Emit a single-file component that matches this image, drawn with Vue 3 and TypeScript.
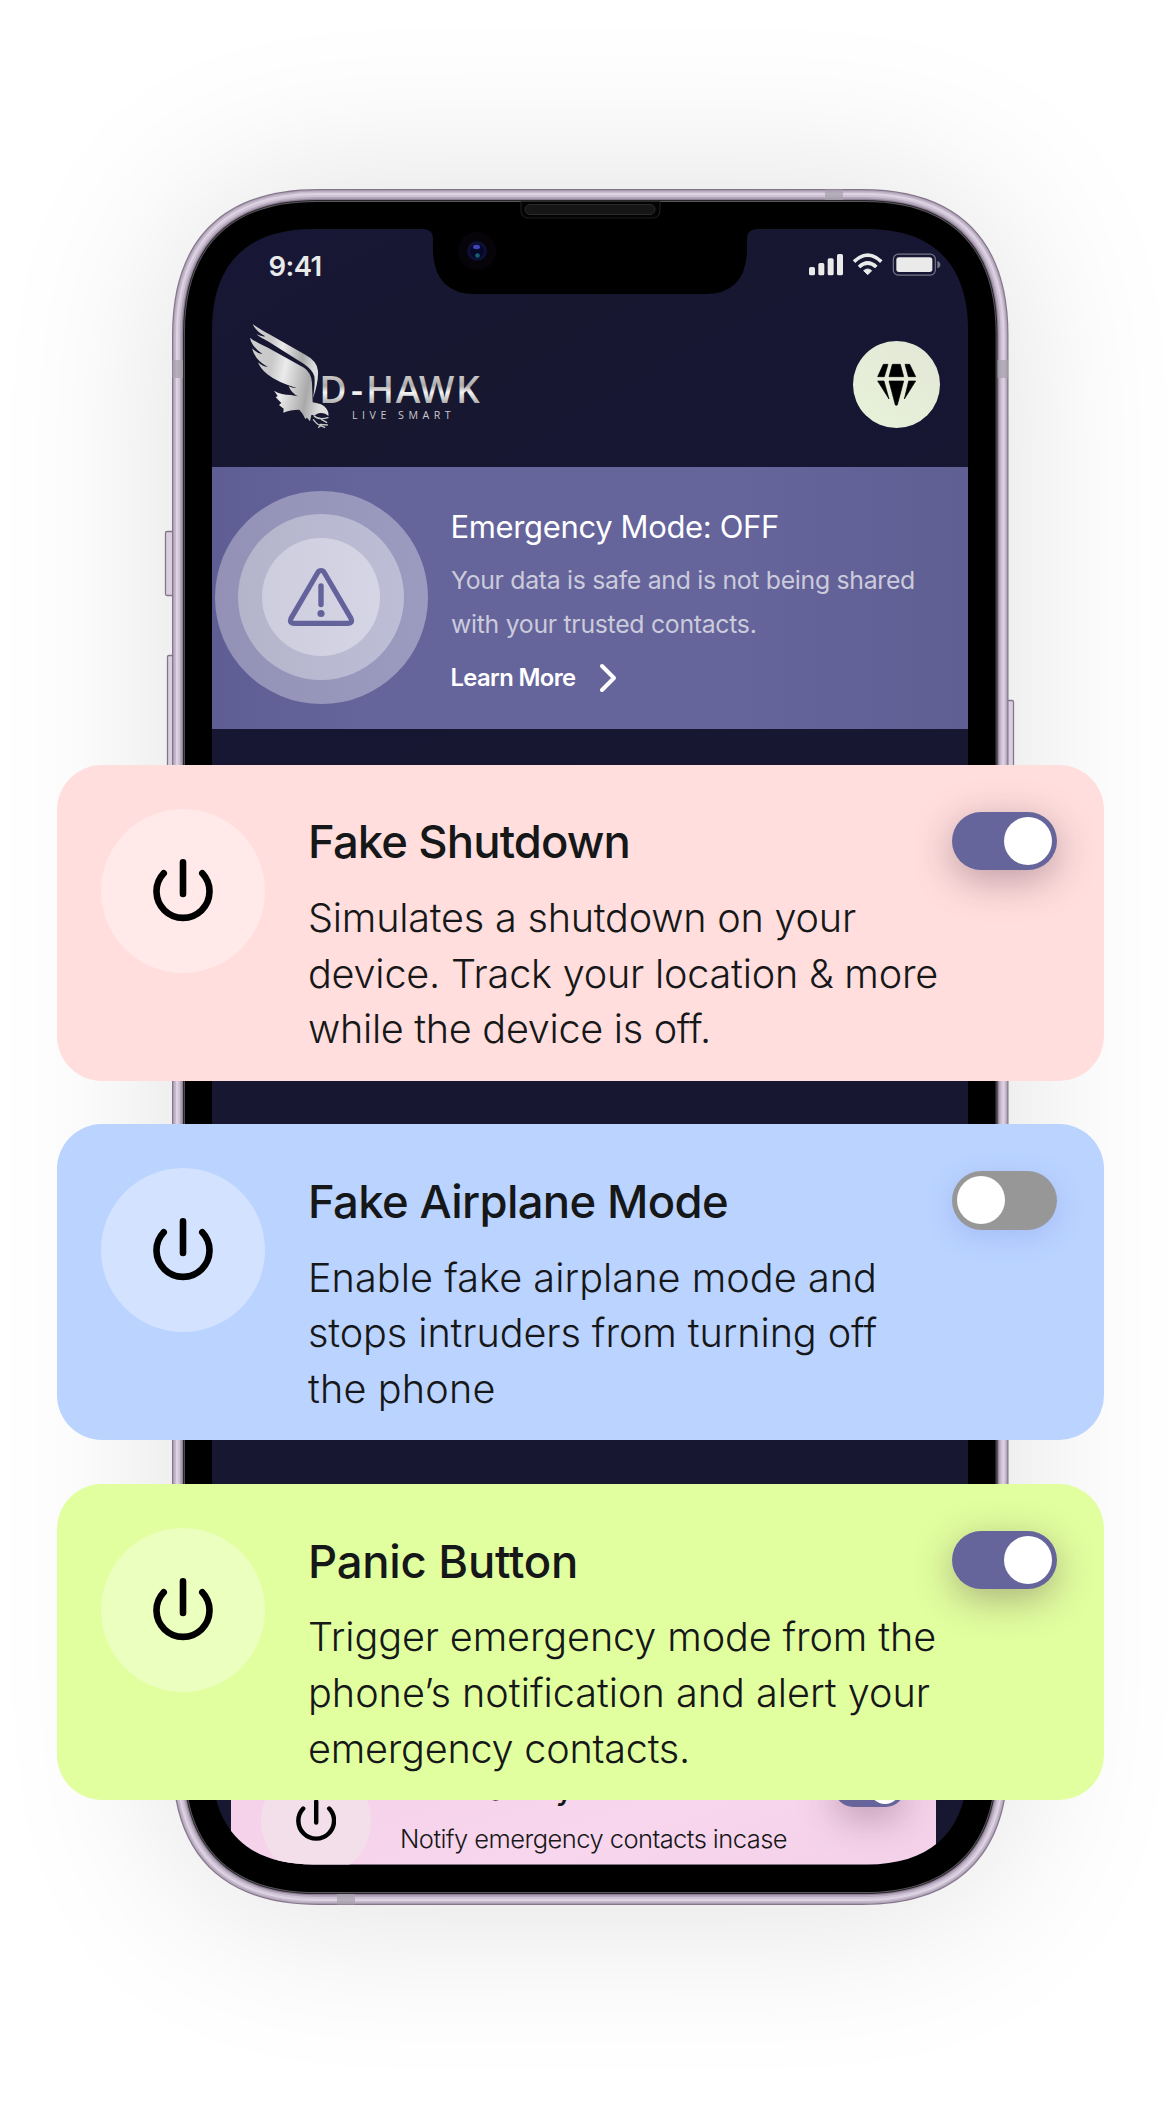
<script setup lang="ts">
import type { Directive } from 'vue'

interface Feature {
  title: string
  titleWidth: number
  lines: [string, number][]
  tone: string
  on: boolean
}

const features: Feature[] = [
  {
    title: 'Fake Shutdown',
    titleWidth: 322,
    lines: [
      ['Simulates a shutdown on your', 548],
      ['device. Track your location & more', 630],
      ['while the device is off.', 403],
    ],
    tone: 'rose',
    on: true,
  },
  {
    title: 'Fake Airplane Mode',
    titleWidth: 420,
    lines: [
      ['Enable fake airplane mode and', 569],
      ['stops intruders from turning off', 569],
      ['the phone', 187.5],
    ],
    tone: 'sky',
    on: false,
  },
  {
    title: 'Panic Button',
    titleWidth: 270,
    lines: [
      ['Trigger emergency mode from the', 628],
      ['phone’s notification and alert your', 622],
      ['emergency contacts.', 382],
    ],
    tone: 'lime',
    on: true,
  },
]

/** Tracks a line of text so that it fills the given measure. */
const vFit: Directive<HTMLElement, number> = {
  mounted(el, { value }) {
    const count = el.textContent?.length ?? 0
    if (count < 2) return
    const gap = (value - el.getBoundingClientRect().width) / count
    el.style.letterSpacing = `${gap.toFixed(3)}px`
  },
}

/** Rounded rectangle with continuous corners. */
function shell(x: number, y: number, w: number, h: number, r: number): string {
  const l = r * 1.15
  const c = r * 0.398
  return [
    `M${x} ${y + l}`,
    `C${x} ${y + c} ${x + c} ${y} ${x + l} ${y}`,
    `H${x + w - l}`,
    `C${x + w - c} ${y} ${x + w} ${y + c} ${x + w} ${y + l}`,
    `V${y + h - l}`,
    `C${x + w} ${y + h - c} ${x + w - c} ${y + h} ${x + w - l} ${y + h}`,
    `H${x + l}`,
    `C${x + c} ${y + h} ${x} ${y + h - c} ${x} ${y + h - l}Z`,
  ].join(' ')
}

const ring = (inset: number): string =>
  shell(172 + inset, 189 + inset, 836.5 - inset * 2, 1716 - inset * 2, 127 - inset)

const frame = [
  { d: ring(0), fill: '#84758a' },
  { d: ring(1.2), fill: '#b3a5b9' },
  { d: ring(2.4), fill: '#c6bacd' },
  { d: ring(4), fill: '#ddd3e3' },
  { d: ring(6), fill: '#cfc3d6' },
  { d: ring(8), fill: '#b5a7bc' },
  { d: ring(9.8), fill: '#8e8095' },
  { d: ring(11), fill: '#2a262c' },
  { d: ring(12), fill: '#5a585b' },
  { d: ring(12.9), fill: '#000000' },
]

const screenClip = { clipPath: `path("${shell(0, 0, 756, 1635.5, 88)}")` }
</script>

<template>
  <main class="stage">
    <section class="phone">
      <div class="glow"></div>
      <svg class="frame" viewBox="0 0 1170 2118" aria-hidden="true">
        <g fill="#d9cfdf" stroke="#85778b" stroke-width="1.3">
          <rect x="165.5" y="531.5" width="9" height="64" rx="1.5" />
          <rect x="167.5" y="655.5" width="7" height="124" rx="1.5" />
          <rect x="1006" y="700.5" width="7.5" height="200" rx="1.5" />
        </g>
        <path v-for="f in frame" :key="f.fill" :d="f.d" :fill="f.fill" />
        <g fill="#a8a2ac" opacity="0.75">
          <rect x="172.5" y="360" width="10.5" height="18" />
          <rect x="997.5" y="360" width="10.5" height="18" />
          <rect x="825" y="189.5" width="18" height="10.5" />
          <rect x="337" y="1894" width="18" height="10.5" />
        </g>
        <path d="M521 201.500V210q0 8 8 8H652q8 0 8-8V201.500" fill="#030303" stroke="#1d1d1e" stroke-width="1.2" />
        <rect x="525" y="204.500" width="130" height="10" rx="5" fill="#161617" stroke="#2b2b2c" />
      </svg>

      <div class="screen" :style="screenClip">
        <header class="top">
          <div class="status">
            <span v-fit="53" class="clock">9:41</span>
            <svg class="signals" viewBox="656 245 399 75" aria-hidden="true">
              <g fill="#e9eae9">
                <rect x="656" y="290" width="18" height="25" rx="5" />
                <rect x="684" y="278" width="18" height="37" rx="5" />
                <rect x="712" y="264" width="18" height="51" rx="5" />
                <rect x="740" y="251" width="18" height="64" rx="5" />
                <path d="M832 313l-12-12q12-10 24 0z" stroke="#e9eae9" stroke-width="3" stroke-linejoin="round" />
                <rect x="918" y="261" width="108" height="44" rx="8" />
              </g>
              <g fill="none" stroke="#e9eae9" stroke-width="11">
                <path d="M791 274Q832 235 873 274" />
                <path d="M806 290Q832 266 858 290" />
              </g>
              <rect x="909" y="251.500" width="126" height="63" rx="15" fill="none" stroke="#777789" stroke-width="3.500" />
              <path d="M1041 272q9 3 9 11t-9 11z" fill="#777789" />
            </svg>
          </div>
          <div class="brand">
            <svg class="logo" viewBox="0 0 750 360" role="img" aria-label="D-Hawk">
              <defs>
                <linearGradient id="silver" x1="0" y1="0.100" x2="1" y2="0.300">
                  <stop offset="0" stop-color="#cfcfcf" />
                  <stop offset="0.300" stop-color="#c8c8c9" />
                  <stop offset="0.480" stop-color="#ebebeb" />
                  <stop offset="0.800" stop-color="#a9a9a9" />
                  <stop offset="1" stop-color="#dedede" />
                </linearGradient>
                <linearGradient id="steel" gradientUnits="userSpaceOnUse" x1="0" y1="184" x2="0" y2="264">
                  <stop offset="0" stop-color="#c9c7c6" />
                  <stop offset="0.350" stop-color="#adabaa" />
                  <stop offset="0.600" stop-color="#f4f4f4" />
                  <stop offset="1" stop-color="#b1b0b0" />
                </linearGradient>
              </defs>
              <g fill="url(#silver)">
                <path d="M38 27Q58 42 92 60L196 119Q232 138 234 168Q236 200 219 250Q226 205 223 184Q219 166 192 147L86 80Q60 68 50 58Q66 66 76 64Q48 50 38 27Z" />
                <path d="M30 68Q46 82 84 98L130 124L192 158Q214 172 216 204L218 262Q250 266 260 282Q267 292 265 303Q256 293 240 294Q230 295 226 300L214 300L210 319L201 308L196 312L188 297L178 284Q150 284 130 293L131 281L117 270L124 264L107 247L113 243L102 227Q125 240 152 240L174 244Q155 235 146 214Q158 220 170 219Q112 202 82 178Q60 160 54 142Q66 154 84 156Q45 135 36 100Q50 114 68 118Q35 95 30 68Z" />
              </g>
              <g fill="none" stroke="#c9c9ca" stroke-width="4" stroke-linecap="round">
                <path d="M222 302Q236 316 264 308M244 313l16 9M220 314Q232 330 242 332M240 328l22 2M242 332l-6 5M242 332l12 5" />
              </g>
              <text x="238 333 378 467 537 648" y="264" class="word" fill="url(#steel)">D-HAWK</text>
              <text x="336" y="312" textLength="296" class="tagline" fill="#c9c9cc">LIVE SMART</text>
            </svg>
            <button class="gem" aria-label="Premium">
              <svg viewBox="788 514 261 261">
                <g stroke="#000" stroke-width="2" stroke-linejoin="round">
                  <path d="M879 584H893L882 621H862ZM906 584H930L940 621H896ZM944 584H958L976 621H954Z" />
                  <path d="M862 634H881L896 688ZM896 634H940L921 706Q918 708 915 706ZM955 634H976L942 688Z" />
                </g>
              </svg>
            </button>
          </div>
        </header>

        <section class="banner">
          <div class="halo"><div class="halo mid"><div class="halo core">
            <svg viewBox="0 0 68 60" aria-hidden="true">
              <path d="M34 3.500Q36 3.500 37.200 5.500L64 51.500Q66 56.300 61 56.300H7Q2 56.300 4 51.500L30.800 5.500Q32 3.500 34 3.500Z" fill="none" stroke="#63629a" stroke-width="5.200" />
              <path d="M34 19V37.500" stroke="#63629a" stroke-width="5.400" stroke-linecap="round" />
              <circle cx="34" cy="46.500" r="3.600" fill="#63629a" />
            </svg>
          </div></div></div>
          <div class="copy">
            <h2><span v-fit="328.5">Emergency Mode: OFF</span></h2>
            <p><span v-fit="464">Your data is safe and is not being shared</span></p>
            <p><span v-fit="305.5">with your trusted contacts.</span></p>
            <a class="more"><span v-fit="125">Learn More</span>
              <svg viewBox="0 0 20 32" aria-hidden="true"><path d="M4 4L16 16L4 28" /></svg>
            </a>
          </div>
        </section>

        <article class="mini">
          <div class="badge">
            <svg viewBox="0 0 60 64"><path d="M10.700 14.200A26.500 26.500 0 1 0 49.300 14.200M30 3.300V35" /></svg>
          </div>
          <div class="mini-copy">
            <h3>Low Battery SMS</h3>
            <p><span v-fit="387">Notify emergency contacts incase</span></p>
            <p>a user phone is turning off</p>
          </div>
          <span class="toggle on"><i></i></span>
        </article>

        <svg class="notch" viewBox="0 0 334 66" aria-hidden="true">
          <path d="M0 0Q10 0 10 10V23Q12 65 52 65H282Q322 65 324 23V10Q324 0 334 0Z" fill="#000" />
          <circle cx="54" cy="22" r="19" fill="#060408" />
          <circle cx="54" cy="22" r="9.800" fill="#0d1138" />
          <circle cx="54" cy="22" r="7" fill="#06072a" />
          <ellipse cx="53.500" cy="18" rx="3.500" ry="2.200" fill="#3f45b4" />
          <circle cx="54.500" cy="26.500" r="2.300" fill="#17606f" />
        </svg>
      </div>
    </section>

    <section class="cards">
      <article v-for="f in features" :key="f.title" class="card" :class="f.tone">
        <div class="badge">
          <svg viewBox="0 0 60 64"><path d="M10.700 14.200A26.500 26.500 0 1 0 49.300 14.200M30 3.300V35" /></svg>
        </div>
        <div class="text">
          <h2><span v-fit="f.titleWidth">{{ f.title }}</span></h2>
          <p v-for="[line, width] in f.lines" :key="line"><span v-fit="width">{{ line }}</span></p>
        </div>
        <span class="toggle" :class="{ on: f.on }"><i></i></span>
      </article>
    </section>
  </main>
</template>

<style>
body {
  background: #fff;
}
</style>

<style scoped>
.stage {
  display: grid;
  width: 1170px;
  height: 2118px;
  overflow: hidden;
  font-family: Inter, 'Liberation Sans', sans-serif;
  color: #161718;
}
.stage > section {
  grid-area: 1 / 1;
}
h2,
h3,
p {
  margin: 0;
  font-weight: 400;
  white-space: nowrap;
}
h2 span,
p span,
.more span,
.clock {
  display: inline-block;
}

.phone {
  position: relative;
  padding: 229px 202px 0 212px;
}
.glow {
  position: absolute;
  inset: 195px 168px 215px 178px;
  border-radius: 130px;
  box-shadow: 0 0 175px 8px rgba(0, 0, 0, 0.125);
}
.frame {
  position: absolute;
  inset: 0;
  width: 1170px;
  height: 2118px;
}
.screen {
  position: relative;
  display: flex;
  flex-direction: column;
  height: 1635.5px;
  overflow: hidden;
  background: linear-gradient(150deg, #171635 0%, #181730 14%, #171633 22%, #181731 40%);
}
.notch {
  position: absolute;
  top: 0;
  left: 211px;
  width: 334px;
  height: 66px;
}
.top {
  flex: none;
  height: 238px;
}
.status {
  display: flex;
  justify-content: space-between;
  padding: 20px 26px 0 56.500px;
  height: 45px;
}
.clock {
  margin-top: 1px;
  font-size: 27.5px;
  font-weight: 600;
  line-height: 33px;
  color: #e9eae9;
}
.signals {
  width: 133px;
  height: 25px;
  margin-top: 2.7px;
}
.brand {
  display: flex;
  justify-content: space-between;
  padding: 21px 28.500px 0 28px;
}
.logo {
  width: 250px;
  height: 120px;
}
.word {
  font: 600 112px 'Open Sans', sans-serif;
}
.tagline {
  font: 400 32px 'Open Sans', sans-serif;
}
.gem {
  width: 87px;
  height: 87px;
  margin-top: 26px;
  padding: 0;
  border: 0;
  border-radius: 50%;
  background: linear-gradient(35deg, #e8f2da, #e3e7d6);
}
.gem svg {
  display: block;
  width: 87px;
  height: 87px;
}

.banner {
  display: flex;
  flex: none;
  align-items: flex-start;
  height: 262px;
  background: linear-gradient(90deg, #5f5e94, #65649b 20%, #65649b 70%, #605f94);
}
.halo {
  display: flex;
  flex: none;
  align-items: center;
  justify-content: center;
  width: 213px;
  height: 213px;
  border-radius: 50%;
  background: linear-gradient(90deg, #9391b6, #9b9abf);
}
.banner > .halo {
  margin: 23.500px 0 0 2.500px;
}
.halo.mid {
  width: 166px;
  height: 166px;
  background: linear-gradient(90deg, #b4b4cb, #bebdd6);
}
.halo.core {
  width: 118px;
  height: 118px;
  background: linear-gradient(90deg, #cecddd, #d6d5e5);
}
.core svg {
  width: 68px;
  height: 60px;
}
.copy {
  padding: 38px 0 0 23px;
  color: #fff;
}
.copy h2 {
  font-size: 31px;
  font-weight: 420;
  line-height: 44px;
}
.copy p {
  padding-left: 0.500px;
  font-size: 24.800px;
  line-height: 43.500px;
  color: #cbcbdb;
}
.copy p:first-of-type {
  margin-top: 10px;
}
.more {
  display: flex;
  align-items: center;
  gap: 22px;
  height: 34px;
  margin-top: 14.500px;
  font-size: 23.800px;
  font-weight: 600;
}
.more svg {
  width: 20px;
  height: 32px;
}
.more path {
  fill: none;
  stroke: #fff;
  stroke-width: 4;
  stroke-linecap: round;
  stroke-linejoin: round;
}

.badge {
  display: flex;
  flex: none;
  align-items: center;
  justify-content: center;
  width: 164px;
  height: 164px;
  border-radius: 50%;
  background: rgba(255, 255, 255, 0.36);
}
.badge svg {
  width: 60px;
  height: 64px;
}
.badge path {
  fill: none;
  stroke: #000;
  stroke-width: 6.600;
  stroke-linecap: round;
}

.toggle {
  flex: none;
  box-sizing: border-box;
  width: 105px;
  height: 58.500px;
  padding: 5.200px;
  border-radius: 30px;
  background: #979797;
  box-shadow: 0 7px 26px rgba(120, 140, 230, 0.3);
}
.toggle i {
  display: block;
  width: 48px;
  height: 48px;
  border-radius: 50%;
  background: #fff;
}
.toggle.on {
  background: #65649b;
  box-shadow: 0 10px 38px rgba(75, 40, 60, 0.36);
}
.toggle.on i {
  margin-left: auto;
}

.mini {
  display: flex;
  flex: none;
  width: 705px;
  height: 213px;
  margin: 1007px 0 0 19px;
  background: linear-gradient(160deg, #f3d0e8, #f8d6ee 50%, #f1cee5);
}
.mini .badge {
  width: 110.500px;
  height: 110.500px;
  margin: 29.600px 0 0 29.500px;
  background: #f3dfea;
}
.mini .badge svg {
  width: 40.400px;
  height: 43.100px;
}
.mini-copy {
  width: 434px;
  padding: 32px 0 0 29px;
}
.mini h3 {
  font-size: 30.500px;
  font-weight: 500;
  line-height: 42px;
}
.mini p {
  font-size: 25.500px;
  font-weight: 350;
  line-height: 37.500px;
}
.mini h3 + p {
  margin-top: 9.500px;
}
.mini .toggle {
  width: 70.500px;
  height: 39.500px;
  margin-top: 31.500px;
  padding: 3.500px;
}
.mini .toggle i {
  width: 32.500px;
  height: 32.500px;
}

.cards {
  position: relative;
  display: flex;
  flex-direction: column;
  gap: 43.700px;
  padding: 764.800px 66px 0 57px;
}
.card {
  display: flex;
  box-sizing: border-box;
  height: 316px;
  padding: 44px 47px 0 44px;
  border-radius: 45px;
}
.card.rose {
  background: #ffdedd;
}
.card.sky {
  background: #bad3ff;
}
.card.lime {
  background: #e1ff9f;
}
.card.lime .badge {
  background: rgba(255, 255, 255, 0.33);
}
.text {
  flex: 1;
  padding-left: 43px;
}
.text h2 {
  margin-top: 2.500px;
  font-size: 45.400px;
  font-weight: 500;
  line-height: 62px;
}
.text h2 + p {
  margin-top: 17.800px;
}
.text p {
  font-size: 39.600px;
  font-weight: 350;
  line-height: 55.600px;
}
.card .toggle {
  margin-top: 2.800px;
}
</style>
